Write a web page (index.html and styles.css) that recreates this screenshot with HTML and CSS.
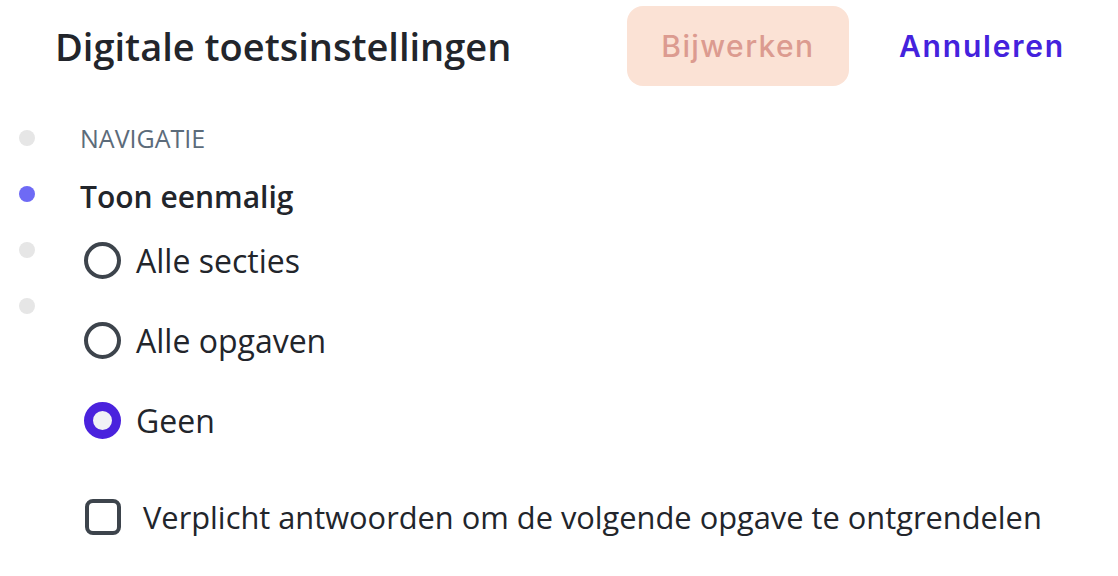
FILE: index.html
```html
<!DOCTYPE html>
<html lang="nl">
<head>
    <meta charset="UTF-8">
    <meta name="viewport" content="width=device-width, initial-scale=1.0">
    <title>Digitale toetsinstellingen</title>
    <link rel="stylesheet" href="styles.css">
</head>
<body>
    <div class="page">
        <div class="header">
            <h1>Digitale toetsinstellingen</h1>
            <button class="btn-update" disabled>Bijwerken</button>
            <a class="btn-cancel" href="#">Annuleren</a>
        </div>

        <div class="body">
            <div class="steps">
                <span class="dot"></span>
                <span class="dot active"></span>
                <span class="dot"></span>
                <span class="dot"></span>
            </div>

            <div class="settings">
                <div class="section-label">NAVIGATIE</div>
                <div class="group-title">Toon eenmalig</div>

                <div class="radio-list">
                    <label class="radio">
                        <span class="radio-mark"></span>
                        <span>Alle secties</span>
                    </label>
                    <label class="radio">
                        <span class="radio-mark"></span>
                        <span>Alle opgaven</span>
                    </label>
                    <label class="radio checked">
                        <span class="radio-mark"></span>
                        <span>Geen</span>
                    </label>
                </div>

                <label class="check">
                    <span class="check-mark"></span>
                    <span class="check-text">Verplicht antwoorden om de volgende opgave te ontgrendelen</span>
                </label>
            </div>
        </div>
    </div>
</body>
</html>
```

FILE: styles.css
```css
* {
    margin: 0;
    padding: 0;
    box-sizing: border-box;
}

body {
    font-family: 'Open Sans', 'Lato', sans-serif;
    background: #fff;
    color: #22252b;
}

.page {
    width: 1118px;
    height: 576px;
    overflow: hidden;
}

/* header */
.header {
    display: flex;
    align-items: center;
    height: 92px;
    padding: 0 53px 0 55px;
}

.header h1 {
    flex: 1;
    font-size: 38px;
    font-weight: 600;
    line-height: 44px;
    color: #22252b;
}

.btn-update {
    width: 222px;
    height: 80px;
    border: none;
    border-radius: 16px;
    background: #fbe2d5;
    color: #dc9b90;
    font-family: 'Inter', sans-serif;
    font-size: 30px;
    font-weight: 500;
    letter-spacing: 1.4px;
    margin-right: 50px;
}

.btn-cancel {
    color: #4422dd;
    font-family: 'Inter', sans-serif;
    font-size: 30px;
    font-weight: 600;
    letter-spacing: 1.8px;
    text-decoration: none;
}

/* body */
.body {
    display: flex;
}

.steps {
    width: 80px;
    padding: 38px 0 0 19px;
    display: flex;
    flex-direction: column;
    gap: 40px;
}

.dot {
    width: 16px;
    height: 16px;
    border-radius: 50%;
    background: #e6e6e6;
}

.dot.active {
    background: #6e6af5;
}

.settings {
    padding-top: 31px;
}

.section-label {
    font-size: 25px;
    color: #5c6b7a;
    height: 30px;
    line-height: 30px;
}

.group-title {
    font-size: 30px;
    font-weight: 600;
    margin-top: 26px;
    height: 36px;
    line-height: 36px;
}

.radio-list {
    display: flex;
    flex-direction: column;
    gap: 44px;
    margin-top: 27px;
    padding-left: 4px;
}

.radio {
    display: flex;
    align-items: center;
    gap: 15px;
    height: 36px;
    font-size: 32px;
}

.radio-mark {
    flex: none;
    width: 37px;
    height: 37px;
    border-radius: 50%;
    border: 4px solid #3d444c;
}

.radio.checked .radio-mark {
    border: 9px solid #4a22dd;
    background: #f1f2f6;
}

.check {
    display: flex;
    align-items: center;
    gap: 22px;
    margin-top: 58px;
    padding-left: 5px;
}

.check-mark {
    flex: none;
    width: 36px;
    height: 36px;
    border: 4px solid #3d444c;
    border-radius: 8px;
}

.check-text {
    font-size: 30.8px;
    color: #22252b;
}
```
